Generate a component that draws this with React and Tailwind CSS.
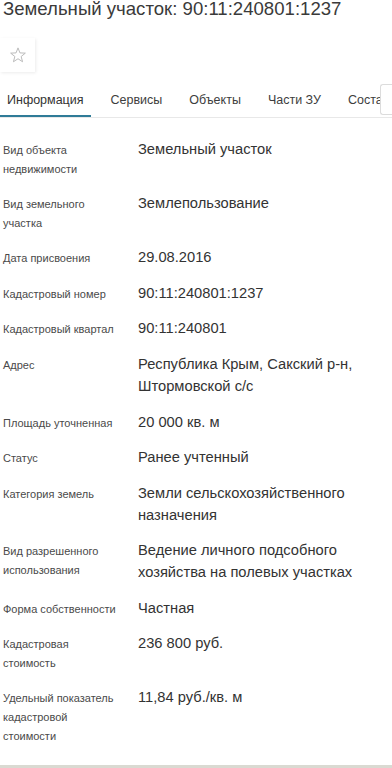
const ROWS = [
  { label: 'Вид объекта недвижимости', value: 'Земельный участок' },
  { label: 'Вид земельного участка', value: 'Землепользование' },
  { label: 'Дата присвоения', value: '29.08.2016' },
  { label: 'Кадастровый номер', value: '90:11:240801:1237' },
  { label: 'Кадастровый квартал', value: '90:11:240801' },
  { label: 'Адрес', value: 'Республика Крым, Сакский р-н, Штормовской с/с' },
  { label: 'Площадь уточненная', value: '20 000 кв. м' },
  { label: 'Статус', value: 'Ранее учтенный' },
  { label: 'Категория земель', value: 'Земли сельскохозяйственного назначения' },
  { label: 'Вид разрешенного использования', value: 'Ведение личного подсобного хозяйства на полевых участках' },
  { label: 'Форма собственности', value: 'Частная' },
  { label: 'Кадастровая стоимость', value: '236 800 руб.' },
  { label: 'Удельный показатель кадастровой стоимости', value: '11,84 руб./кв. м' },
]

const TABS = ['Информация', 'Сервисы', 'Объекты', 'Части ЗУ', 'Состав']

function StarIcon() {
  return (
    <svg width="18" height="18" viewBox="0 0 24 24" fill="none" stroke="#b9b9b9" strokeWidth="1.3" strokeLinejoin="miter">
      <polygon points="12,2.5 14.6,9.2 21.8,9.5 16.2,14 18.1,21 12,17 5.9,21 7.8,14 2.2,9.5 9.4,9.2" />
    </svg>
  )
}

export default function App() {
  return (
    <div className="min-h-[768px] overflow-hidden bg-white font-['Liberation_Sans',Arial,sans-serif] text-[#333]">
      <h1 className="whitespace-nowrap px-[3px] text-[18.6px] leading-[17px] text-[#3a3a3a]">
        Земельный участок: 90:11:240801:1237
      </h1>

      <button className="mt-[21px] flex h-[34px] w-[35px] items-center justify-center bg-white shadow-[1px_1px_3px_rgba(0,0,0,0.08)]">
        <StarIcon />
      </button>

      {/* Tabs */}
      <div className="relative mt-[9px] flex gap-[13px] overflow-hidden border-b border-[#e8e8e8]">
        {TABS.map((t, i) => (
          <div
            key={t}
            className={`-mb-px shrink-0 whitespace-nowrap px-[7px] pt-[9px] pb-[5px] text-[12.5px] leading-[20px] border-b-[3px] ${
              i === 0 ? 'border-[#2f7b97] text-[#333]' : 'border-transparent text-[#3d3d3d]'
            }`}
          >
            {t}
          </div>
        ))}
        <div className="absolute right-0 top-[3px] h-[31px] w-[12px] rounded-l-[3px] border border-r-0 border-[#dcdcdc] bg-white" />
      </div>

      {/* Properties */}
      <div className="mt-[15px] px-[3px]">
        {ROWS.map((r) => (
          <div key={r.label} className="flex items-start py-[8px]">
            <div className="w-[120px] shrink-0 text-[11px] leading-[19px] text-[#4a4a4a]">{r.label}</div>
            <div className="-mt-[2px] ml-[15px] pr-3 text-[14.7px] leading-[21.7px] text-[#333]">{r.value}</div>
          </div>
        ))}
      </div>

      <div className="mt-[11px] h-[3px] bg-[#dadad2]" />
    </div>
  )
}
